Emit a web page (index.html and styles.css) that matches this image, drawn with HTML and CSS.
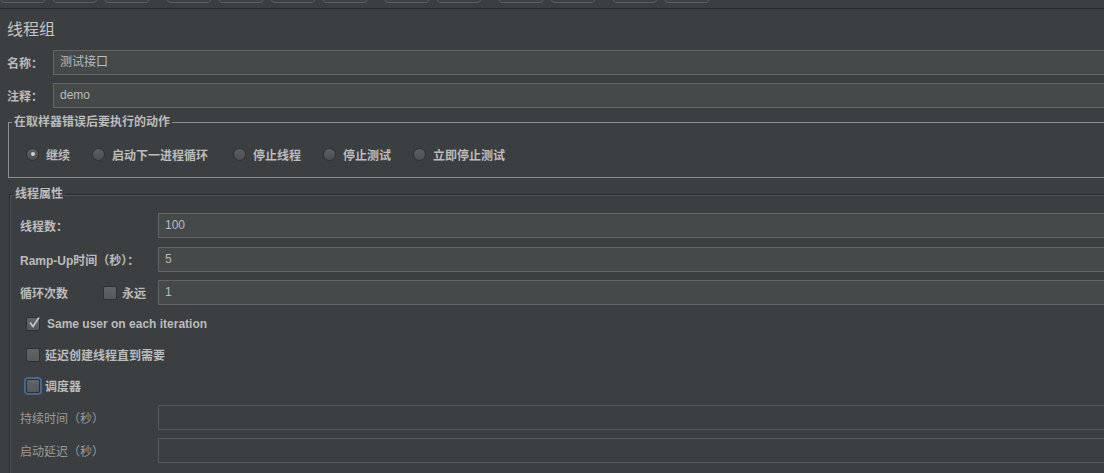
FILE: index.html
```html
<!DOCTYPE html>
<html lang="zh">

<head>
    <meta charset="utf-8">
    <meta name="viewport" content="width=device-width, initial-scale=1.0">
    <title>线程组</title>
    <link rel="stylesheet" href="styles.css">
</head>

<body>
    <div class="toolbar">
        <span class="tool"></span>
        <span class="tool"></span>
        <span class="tool"></span>
        <span class="tool ny"></span>
        <span class="tool"></span>
        <span class="tool"></span>
        <span class="tool"></span>
        <span class="tool ny"></span>
        <span class="tool"></span>
        <span class="tool ny"></span>
        <span class="tool"></span>
        <span class="tool ny"></span>
        <span class="tool"></span>
    </div>

    <h1 class="titel">线程组</h1>

    <div class="felt">
        <label class="etiket">名称：</label>
        <div class="input">测试接口</div>
    </div>
    <div class="felt">
        <label class="etiket">注释：</label>
        <div class="input">demo</div>
    </div>

    <fieldset class="gruppe lys">
        <legend>在取样器错误后要执行的动作</legend>
        <div class="radios">
            <span class="radio valgt"></span><span class="radiotekst">继续</span>
            <span class="radio"></span><span class="radiotekst lang">启动下一进程循环</span>
            <span class="radio"></span><span class="radiotekst">停止线程</span>
            <span class="radio"></span><span class="radiotekst">停止测试</span>
            <span class="radio"></span><span class="radiotekst">立即停止测试</span>
        </div>
    </fieldset>

    <fieldset class="gruppe mork">
        <legend>线程属性</legend>
        <div class="raekke forste">
            <span class="navn">线程数：</span>
            <div class="input tal">100</div>
        </div>
        <div class="raekke">
            <span class="navn">Ramp-Up时间（秒）：</span>
            <div class="input tal">5</div>
        </div>
        <div class="raekke tredje">
            <span class="navn kort">循环次数</span>
            <span class="boks"></span>
            <span class="boksnavn">永远</span>
            <div class="input tal">1</div>
        </div>

        <div class="valg">
            <span class="boks">
                <svg width="14" height="14" viewBox="0 0 14 14">
                    <path d="M3 6.5 L6 10.5 L12 1.5" fill="none" stroke="#c4c4c4" stroke-width="1.8" />
                </svg>
            </span>
            <span class="valgtekst latin">Same user on each iteration</span>
        </div>
        <div class="valg">
            <span class="boks"></span>
            <span class="valgtekst">延迟创建线程直到需要</span>
        </div>
        <div class="valg">
            <span class="boks fokus"></span>
            <span class="valgtekst">调度器</span>
        </div>

        <div class="raekke slukket forste-slukket">
            <span class="navn">持续时间（秒）</span>
            <div class="input"></div>
        </div>
        <div class="raekke slukket">
            <span class="navn">启动延迟（秒）</span>
            <div class="input"></div>
        </div>
    </fieldset>
</body></html>
```

FILE: styles.css
```css
* {
    box-sizing: border-box;
}

body {
    margin: 0;
    background-color: #3c3f41;
    color: #bbbbbb;
    font-family: "Liberation Sans", "Noto Sans CJK SC", sans-serif;
    font-size: 12px;
    overflow: hidden;
    height: 473px;
}

.toolbar {
    display: flex;
    align-items: flex-start;
    height: 9px;
    border-bottom: 1px solid #2b2b2b;
    overflow: hidden;
    padding-left: 1px;
}

.tool {
    flex: none;
    width: 44px;
    height: 20px;
    margin-top: -17px;
    margin-left: 8px;
    border: 1px solid #5b5e60;
    border-radius: 3px;
    background-color: #3e4143;
}

.tool:first-child {
    margin-left: 0;
}

.tool.ny {
    margin-left: 18px;
}

.titel {
    margin: 0;
    height: 41px;
    padding: 11px 0 0 7px;
    font-size: 16px;
    line-height: 20px;
    font-weight: normal;
    color: #c4c4c4;
}

.felt {
    display: flex;
    align-items: center;
    height: 25px;
    padding-left: 7px;
}

.felt+.felt {
    margin-top: 8px;
}

.etiket {
    width: 46px;
    font-weight: bold;
}

.input {
    flex: 1;
    height: 25px;
    margin-right: -3px;
    padding-left: 6px;
    line-height: 23px;
    border: 1px solid #646464;
    background-color: #45494a;
    color: #bbbbbb;
}

.gruppe {
    margin: 6px -20px 0 8px;
    padding: 0 0 0 3px;
    min-width: 0;
}

.gruppe legend {
    padding: 0 2px;
    line-height: 16px;
    font-weight: bold;
}

.lys {
    border: 1px solid #8e9092;
    padding-bottom: 15px;
}

.mork {
    margin-top: 8px;
    margin-left: 9px;
    border: none;
    border-top: 1px solid #2b2b2b;
    border-left: 1px solid #2b2b2b;
    box-shadow: inset 1px 1px 0 #515456;
    height: 300px;
}

.radios {
    display: flex;
    align-items: center;
    height: 16px;
    margin-top: 16px;
    padding-left: 14px;
}

.radio {
    flex: none;
    width: 13px;
    height: 13px;
    margin-right: 7px;
    border-radius: 50%;
    border: 1px solid #2f3133;
    background: linear-gradient(#5d6062, #4c4f51);
    display: flex;
    align-items: center;
    justify-content: center;
}

.radio.valgt::after {
    content: "";
    width: 4px;
    height: 4px;
    border-radius: 50%;
    background-color: #d0d0d0;
}

.radiotekst {
    margin-right: 22px;
    font-weight: bold;
}

.radiotekst.lang {
    margin-right: 25px;
}

.raekke {
    display: flex;
    align-items: center;
    height: 25px;
    margin-top: 9px;
    padding-left: 7px;
}

.raekke.forste {
    margin-top: 11px;
}

.raekke.tredje {
    margin-top: 8px;
}

.navn {
    flex: none;
    width: 138px;
    font-weight: bold;
}

.navn.kort {
    width: 83px;
}

.boks {
    flex: none;
    width: 14px;
    height: 14px;
    border: 1px solid #2f3133;
    border-radius: 2px;
    background: linear-gradient(#626567, #56595b);
    position: relative;
}

.boks svg {
    position: absolute;
    left: 0;
    top: -2px;
}

.boks.fokus {
    box-shadow: 0 0 0 2px #46698f;
}

.boksnavn {
    width: 41px;
    padding-left: 5px;
    font-weight: bold;
}

.valg {
    display: flex;
    align-items: center;
    height: 31px;
    padding-left: 13px;
}

.raekke.tredje+.valg {
    margin-top: 3px;
}

.valgtekst {
    padding-left: 5px;
    font-weight: bold;
}

.valgtekst.latin {
    padding-left: 7px;
}

.slukket .navn {
    font-weight: normal;
    color: #9a9a9a;
}

.slukket .input {
    background-color: #3c3f41;
    border-color: #565859;
}

.raekke.forste-slukket {
    margin-top: 4px;
}

.raekke.slukket+.raekke.slukket {
    margin-top: 8px;
}
```
